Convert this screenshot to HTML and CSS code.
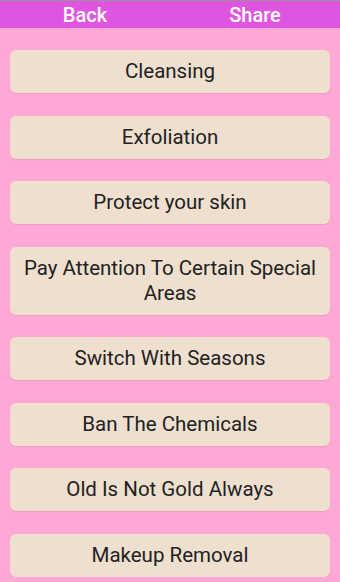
FILE: index.html
```html
<!DOCTYPE html>
<html lang="en">
<head>
    <meta charset="UTF-8">
    <meta name="viewport" content="width=device-width, initial-scale=1.0">
    <title>Skin Care</title>
    <link rel="stylesheet" href="styles.css">
</head>
<body>
    <div class="top-bar">
        <button class="top-btn">Back</button>
        <button class="top-btn">Share</button>
    </div>
    <div class="list">
        <button class="item">Cleansing</button>
        <button class="item">Exfoliation</button>
        <button class="item">Protect your skin</button>
        <button class="item">Pay Attention To Certain Special Areas</button>
        <button class="item">Switch With Seasons</button>
        <button class="item">Ban The Chemicals</button>
        <button class="item">Old Is Not Gold Always</button>
        <button class="item">Makeup Removal</button>
    </div>
</body>
</html>
```
FILE: styles.css
```css
body {
    font-family: Roboto, "Noto Sans", sans-serif;
    background-color: #ffa8d6;
    margin: 0;
    padding: 0;
    overflow: hidden;
}
.top-bar {
    display: flex;
    background-color: #e055df;
    border-top: 1px solid #a08ca0;
    height: 27px;
}
.top-btn {
    flex: 1;
    background: transparent;
    border: none;
    color: #fff;
    font-family: inherit;
    font-size: 20px;
    font-weight: 500;
    padding: 2px 0 0;
    line-height: 25px;
}
.list {
    display: flex;
    flex-direction: column;
    gap: 22.5px;
    padding: 22px 10px 0;
}
.item {
    background-color: #eedfcf;
    border: none;
    border-radius: 6px;
    color: #222;
    font-family: inherit;
    font-size: 20.5px;
    line-height: 25px;
    padding: 9px 10px;
    text-align: center;
    box-shadow: 0 1px 1px rgba(0, 0, 0, 0.08);
}
```
